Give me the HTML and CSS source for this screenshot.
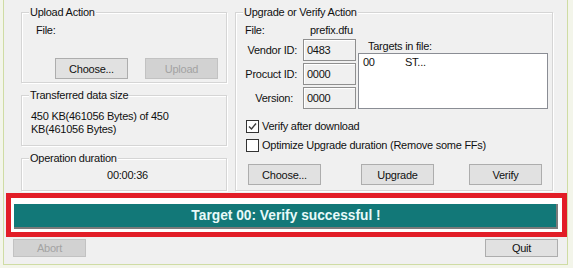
FILE: index.html
```html
<!DOCTYPE html>
<html>
<head>
<meta charset="utf-8">
<link rel="stylesheet" href="styles.css">
</head>
<body>
<div class="win">
  <div class="top">
    <div class="leftcol">
      <div class="group g-upload">
        <div class="gt">Upload Action</div>
        <div class="up-file">File:</div>
        <div class="up-btns">
          <div class="btn">Choose...</div>
          <div class="btn disabled">Upload</div>
        </div>
      </div>
      <div class="group g-transfer">
        <div class="gt">Transferred data size</div>
        <div class="tr-text">450 KB(461056 Bytes) of 450 KB(461056 Bytes)</div>
      </div>
      <div class="group g-op">
        <div class="gt">Operation duration</div>
        <div class="op-val">00:00:36</div>
      </div>
    </div>
    <div class="group g-right">
      <div class="gt">Upgrade or Verify Action</div>
      <div class="rf-row"><span class="rf-lbl">File:</span><span>prefix.dfu</span></div>
      <div class="ids">
        <div class="idgrid">
          <div class="idl">Vendor ID:</div><div class="idbox">0483</div>
          <div class="idl">Procuct ID:</div><div class="idbox">0000</div>
          <div class="idl idl-v">Version:</div><div class="idbox">0000</div>
        </div>
        <div class="targets">
          <div class="tg-lbl">Targets in file:</div>
          <div class="listbox">
            <div class="lrow"><span class="lc1">00</span><span>ST...</span></div>
          </div>
        </div>
      </div>
      <div class="chk chk1">
        <span class="box"><svg width="11" height="11" viewBox="0 0 11 11"><path d="M2 5.5 L4.5 8 L9 2.5" fill="none" stroke="#3c3c3c" stroke-width="1.4"/></svg></span>
        <span>Verify after download</span>
      </div>
      <div class="chk chk2">
        <span class="box"></span>
        <span>Optimize Upgrade duration (Remove some FFs)</span>
      </div>
      <div class="r-btns">
        <div class="btn">Choose...</div>
        <div class="btn b-upg">Upgrade</div>
        <div class="btn b-ver">Verify</div>
      </div>
    </div>
  </div>
  <div class="status">
    <div class="bar">Target 00: Verify successful !</div>
  </div>
  <div class="bottom">
    <div class="btn sbtn disabled">Abort</div>
    <div class="btn sbtn">Quit</div>
  </div>
</div>
</body>
</html>
```
FILE: styles.css
```css
body {
  margin: 0;
  width: 573px;
  height: 268px;
  overflow: hidden;
  background: #f3f5ea;
  font-family: "Liberation Sans", Arial, sans-serif;
  font-size: 11px;
  letter-spacing: -0.25px;
  color: #111;
}
.win {
  box-sizing: border-box;
  margin-left: 3px;
  width: 565px;
  height: 265px;
  border: 1px solid #cfdca4;
  border-top: 0;
  background: #f0f0f0;
  display: flex;
  flex-direction: column;
}
.top {
  display: flex;
  padding: 12px 0 0 17px;
  gap: 8px;
}
.leftcol {
  width: 206px;
  display: flex;
  flex-direction: column;
}
.group {
  box-sizing: border-box;
  border: 1px solid #d5d5d5;
  box-shadow: 1px 1px 0 #fff, inset 1px 1px 0 #fff;
}
.gt {
  width: fit-content;
  margin: -7px 0 0 7px;
  padding: 0 1px;
  background: #f0f0f0;
  line-height: 13px;
  white-space: nowrap;
}
.g-upload { height: 71px; }
.up-file { margin-top: 5px; padding-left: 14px; line-height: 13px; }
.up-btns { display: flex; gap: 17px; margin-top: 21px; padding-left: 33px; }
.btn {
  box-sizing: border-box;
  width: 73px;
  height: 21px;
  border: 1px solid #adadad;
  background: #e1e1e1;
  display: flex;
  align-items: center;
  justify-content: center;
  color: #111;
}
.btn.disabled {
  background: #d2d2d2;
  border-color: #c2c2c2;
  color: #a3a3a3;
}
.g-transfer { height: 51px; margin-top: 12px; }
.tr-text { margin-top: 8px; padding-left: 9px; width: 150px; line-height: 13px; }
.g-op { height: 33px; margin-top: 12px; }
.op-val { margin-top: 4px; padding-left: 7px; text-align: center; line-height: 13px; }

.g-right { width: 318px; height: 179px; }
.rf-row { display: flex; margin-top: 5px; padding-left: 9px; line-height: 13px; }
.rf-lbl { width: 65px; }
.ids { display: flex; margin-top: 2px; }
.idgrid {
  display: grid;
  grid-template-columns: 61px 53px;
  grid-auto-rows: 22px;
  column-gap: 6px;
  row-gap: 2px;
}
.idl { text-align: right; align-self: center; line-height: 13px; }
.idl-v { padding-right: 4px; }
.idbox {
  box-sizing: border-box;
  border: 1px solid #8f8f8f;
  box-shadow: inset 1px 1px 0 #fff;
  background: #f0f0f0;
  padding-left: 3px;
  line-height: 20px;
}
.targets { margin-left: 2px; padding-top: 1px; }
.tg-lbl { margin-left: 10px; line-height: 13px; }
.listbox {
  box-sizing: border-box;
  width: 190px;
  height: 56px;
  border: 1px solid #8a8d94;
  background: #fff;
  padding: 2px 0 0 4px;
}
.lrow { display: flex; line-height: 13px; }
.lc1 { width: 42px; }
.chk { display: flex; align-items: center; padding-left: 10px; line-height: 13px; }
.chk1 { margin-top: 11px; }
.chk2 { margin-top: 6px; }
.box {
  box-sizing: border-box;
  width: 13px;
  height: 13px;
  border: 1px solid #333;
  background: #fff;
  margin-right: 3px;
  display: flex;
  align-items: center;
  justify-content: center;
}
.r-btns { display: flex; margin-top: 12px; padding-left: 12px; }
.b-upg { margin-left: 40px; }
.b-ver { margin-left: 35px; }

.status {
  box-sizing: border-box;
  margin: 2px 0 0 2px;
  width: 561px;
  height: 44px;
  border: 5px solid #e21d27;
  background: #fff;
  padding: 6px 4px 0 3px;
}
.bar {
  box-sizing: border-box;
  height: 25px;
  background: #127878;
  border-right: 2px solid #7a7a7a;
  border-bottom: 2px solid #7a7a7a;
  color: #e8fafa;
  font-weight: bold;
  font-size: 13.75px;
  letter-spacing: 0;
  line-height: 23px;
  text-align: center;
  padding-left: 2px;
}
.bottom {
  display: flex;
  justify-content: space-between;
  margin-top: 2px;
  padding: 0 9px;
}
.sbtn { height: 18px; }
```
